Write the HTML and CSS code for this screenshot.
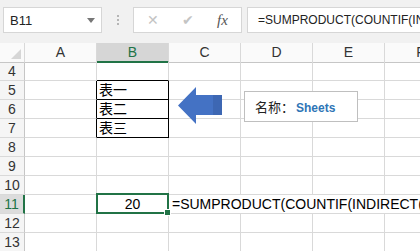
FILE: index.html
```html
<!DOCTYPE html>
<html>
<head>
<meta charset="UTF-8">
<title>SUMPRODUCT</title>
<link rel="stylesheet" href="styles.css">
</head>
<body>
<div class="bar">
	<div class="namebox"><span>B11</span><i class="caret"></i></div>
	<div class="dots"><i></i><i></i><i></i></div>
	<div class="btns">
		<span class="btn-x">&#x2715;</span>
		<span class="btn-ok">&#x2714;</span>
		<span class="btn-fx">fx</span>
	</div>
	<div class="formula">=SUMPRODUCT(COUNTIF(INDIRECT(B5:B7&amp;"!A:A"),"*"))</div>
</div>

<div class="sheet">
	<div class="row hd"><div class="corner"></div><div>A</div><div class="on">B</div><div>C</div><div>D</div><div>E</div><div>F</div></div>
	<div class="row"><div class="rh">4</div><div></div><div class="tb-top"></div><div></div><div></div><div></div><div></div></div>
	<div class="row"><div class="rh">5</div><div class="tb-left"></div><div class="tb">表一</div><div></div><div></div><div></div><div></div></div>
	<div class="row"><div class="rh">6</div><div class="tb-left"></div><div class="tb">表二</div><div></div><div></div><div></div><div></div></div>
	<div class="row"><div class="rh">7</div><div class="tb-left"></div><div class="tb">表三</div><div></div><div></div><div></div><div></div></div>
	<div class="row"><div class="rh">8</div><div></div><div></div><div></div><div></div><div></div><div></div></div>
	<div class="row"><div class="rh">9</div><div></div><div></div><div></div><div></div><div></div><div></div></div>
	<div class="row"><div class="rh">10</div><div></div><div></div><div></div><div></div><div></div><div></div></div>
	<div class="row"><div class="rh on">11</div><div></div><div class="num sel">20</div><div class="overflow">=SUMPRODUCT(COUNTIF(INDIRECT(B5:B7&amp;"!A:A"),"*"))</div></div>
	<div class="row"><div class="rh">12</div><div></div><div></div><div></div><div></div><div></div><div></div></div>
	<div class="row"><div class="rh">13</div><div></div><div></div><div></div><div></div><div></div><div></div></div>

	<svg class="arrow" width="44" height="38" viewBox="0 0 44 38">
		<path d="M0 18.5 L18 0 L18 8 L44 8 L44 28 L18 28 L18 37 Z" fill="#4472c4"/>
		<rect x="35" y="8" width="9" height="20" fill="#3d67b3"/>
	</svg>
	<div class="label">名称：<b>Sheets</b></div>
</div>
</body>
</html>
```

FILE: styles.css
```css
body {
	margin: 0;
	width: 420px;
	height: 251px;
	overflow: hidden;
	background: #fff;
	font-family: "Liberation Sans", Arial, "Noto Sans CJK SC", sans-serif;
	color: #000;
}

/* formula bar */
.bar {
	display: flex;
	align-items: flex-start;
	height: 43px;
	padding: 7px 0 0 3px;
	box-sizing: border-box;
	background: #f1f1f1;
}
.namebox {
	width: 99px;
	height: 26px;
	box-sizing: border-box;
	border: 1px solid #d6d6d6;
	background: #fff;
	display: flex;
	align-items: center;
	justify-content: space-between;
	padding: 0 6px 0 6px;
	font-size: 13px;
	color: #222;
}
.caret {
	width: 0;
	height: 0;
	border-left: 4px solid transparent;
	border-right: 4px solid transparent;
	border-top: 5px solid #777;
}
.dots {
	width: 31px;
	height: 26px;
	display: flex;
	flex-direction: column;
	align-items: center;
	justify-content: center;
	gap: 2px;
}
.dots i {
	width: 2px;
	height: 2px;
	background: #b5b5b5;
}
.btns {
	width: 109px;
	height: 26px;
	box-sizing: border-box;
	border: 1px solid #d6d6d6;
	background: #fff;
	position: relative;
	color: #c4c4c4;
	font-size: 14px;
	line-height: 24px;
}
.btns span {
	position: absolute;
	top: 0;
}
.btn-x { left: 13px; }
.btn-ok { left: 48px; }
.btn-fx {
	left: 83px;
	color: #555;
	font-family: "Liberation Serif", serif;
	font-style: italic;
	font-size: 15px;
}
.formula {
	flex: 1;
	margin-left: 5px;
	height: 26px;
	box-sizing: border-box;
	border: 1px solid #d6d6d6;
	border-right: 0;
	background: #fff;
	padding-left: 10px;
	font-size: 12px;
	line-height: 24px;
	white-space: nowrap;
	overflow: hidden;
	color: #222;
}

/* grid */
.sheet {
	position: relative;
	overflow: hidden;
	height: 208px;
}
.row {
	display: grid;
	grid-template-columns: 25px repeat(6, 72px);
	height: 19px;
}
.row > div {
	box-sizing: border-box;
	border-right: 1px solid #d9d9d9;
	border-bottom: 1px solid #d9d9d9;
	font-size: 14px;
	line-height: 18px;
	white-space: nowrap;
	padding-left: 2px;
}
.hd > div {
	background: #fafafa;
	text-align: center;
	padding: 0;
	color: #333;
	border-bottom-color: #c6c6c6;
}
.hd > div.on {
	background: #d6d6d6;
	color: #217346;
	border-bottom: 2px solid #217346;
}
.hd .corner {
	position: relative;
}
.hd .corner::after {
	content: "";
	position: absolute;
	right: 3px;
	bottom: 3px;
	border-left: 10px solid transparent;
	border-bottom: 10px solid #d6d6d6;
}
.row > .rh {
	background: #f5f5f5;
	text-align: center;
	padding: 0;
	color: #333;
	border-right-color: #c6c6c6;
	border-bottom-color: #d9d9d9;
}
.row > .rh.on {
	background: #dcdcdc;
	color: #217346;
	border-right: 2px solid #217346;
}

/* the table B5:B7 */
.row > .tb-top { border-bottom-color: #000; }
.row > .tb-left { border-right-color: #000; }
.row > .tb {
	border-right-color: #000;
	border-bottom-color: #000;
	font-family: "Noto Sans CJK SC", sans-serif;
	line-height: 17px;
}

/* B11 */
.row > .num {
	text-align: center;
	padding: 0;
}
.sel {
	position: relative;
}
.sel::before {
	content: "";
	position: absolute;
	left: -1px;
	top: -2px;
	right: -1px;
	bottom: -1px;
	border: 2px solid #217346;
}
.sel::after {
	content: "";
	position: absolute;
	right: -3px;
	bottom: -3px;
	width: 5px;
	height: 5px;
	background: #217346;
	border: 1px solid #fff;
}
.row > .overflow {
	grid-column: span 4;
	padding-left: 3px;
	overflow: hidden;
}

/* floating shapes */
.arrow {
	position: absolute;
	left: 178px;
	top: 44px;
}
.label {
	position: absolute;
	left: 244px;
	top: 48px;
	width: 114px;
	height: 31px;
	box-sizing: border-box;
	border: 1px solid #bfbfbf;
	background: #fff;
	padding-left: 10px;
	font-family: "Noto Sans CJK SC", sans-serif;
	font-size: 13px;
	line-height: 29px;
	color: #222;
}
.label b {
	font-family: "Liberation Sans", Arial, sans-serif;
	font-size: 12px;
	color: #2e75b6;
	margin-left: 2px;
}
```
